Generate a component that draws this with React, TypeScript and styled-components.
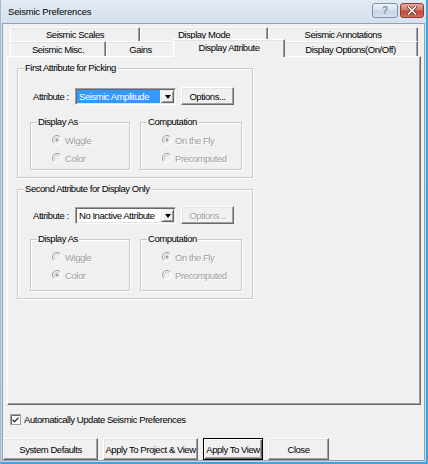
import React from "react";
import styled, { createGlobalStyle, css } from "styled-components";

const FONT = `"Liberation Sans", Arial, sans-serif`;

const GlobalStyle = createGlobalStyle`
  html, body {
    margin: 0;
    padding: 0;
    background: #ffffff;
  }
  body {
    font-family: ${FONT};
    font-size: 9.5px;
    letter-spacing: -0.45px;
    color: #000;
  }
`;

//styled-components//

const Window = styled.div`
  width: 428px;
  height: 464px;
  box-sizing: border-box;
  display: flex;
  flex-direction: column;
  background: linear-gradient(to bottom, #e2eaf3 0px, #d6e1ed 22px, #c8d8ea 100%);
  border-left: 1px solid #a6b9cc;
  border-right: 2px solid #3ba4dc;
  border-bottom: 2px solid #3ba4dc;
  padding: 0 1px 1px 1px;
`;

const TitleBar = styled.div`
  height: 23px;
  flex: none;
  display: flex;
  align-items: flex-start;
  padding: 0 1px 0 6px;
  box-sizing: border-box;
`;

const TitleText = styled.span`
  flex: 1;
  font-size: 9.5px;
  letter-spacing: -0.2px;
  line-height: 13px;
  padding-top: 5px;
  color: #000;
`;

const CaptionButton = styled.div<{ $close?: boolean; $w: number }>`
  width: ${(p) => p.$w}px;
  height: 15px;
  margin-top: 3px;
  margin-left: 2px;
  box-sizing: border-box;
  border-radius: 3px;
  display: flex;
  align-items: center;
  justify-content: center;
  border: 1px solid #7d93ab;
  background: linear-gradient(to bottom, #eef3f9 0%, #d8e2ee 45%, #c6d4e4 55%, #d5e1ee 100%);
  color: #8193a8;
  font: bold 10px "Liberation Sans", sans-serif;
  letter-spacing: 0;
  ${(p) =>
    p.$close &&
    css`
      border-color: #8d3b35;
      background: linear-gradient(to bottom, #e9a99d 0%, #d47a6c 45%, #c2493a 55%, #d36a55 100%);
    `}
`;

const Client = styled.div`
  flex: 1;
  display: flex;
  flex-direction: column;
  background: #f0f0f0;
  border: 1px solid #8ea3b9;
`;

const TabArea = styled.div`
  margin: 3px 3px 0 4px;
  display: flex;
  flex-direction: column;
`;

const TabRows = styled.div`
  display: flex;
  flex-direction: column;
  padding: 0 2px 0 3px;
`;

const TabRow = styled.div<{ $h: number }>`
  display: flex;
  height: ${(p) => p.$h}px;
  position: relative;
`;

const Tab = styled.div<{ $w: number; $active?: boolean }>`
  width: ${(p) => p.$w}px;
  flex: none;
  box-sizing: border-box;
  display: flex;
  align-items: center;
  justify-content: center;
  background: #f0f0f0;
  border-top: 1px solid #ffffff;
  border-left: 1px solid #ffffff;
  border-right: 1px solid #696969;
  box-shadow: inset -1px 0 0 #a0a0a0, inset 0 1px 0 #e3e3e3;
  white-space: nowrap;
  ${(p) =>
    p.$active &&
    css`
      width: ${p.$w + 4}px;
      margin: -2px -2px -1px -2px;
      padding-bottom: 2px;
      position: relative;
      z-index: 2;
    `}
`;

const Panel = styled.div`
  height: 349px;
  box-sizing: border-box;
  border: 1px solid;
  border-color: #ffffff #696969 #696969 #ffffff;
  box-shadow: inset -1px -1px 0 #a0a0a0;
  padding: 11px 0 0 9px;
  display: flex;
  flex-direction: column;
  gap: 11px;
`;

const Group = styled.div<{ $w: number; $h: number }>`
  position: relative;
  box-sizing: border-box;
  width: ${(p) => p.$w}px;
  height: ${(p) => p.$h}px;
  border: 1px solid #c9c9c9;
  box-shadow: inset 1px 1px 0 #ffffff, 1px 1px 0 #ffffff;
  display: flex;
  flex-direction: column;
`;

const Legend = styled.span`
  position: absolute;
  top: -7px;
  left: 6px;
  padding: 0 1px;
  background: #f0f0f0;
  line-height: 12px;
  white-space: nowrap;
`;

const AttrRow = styled.div<{ $top: number }>`
  display: flex;
  align-items: center;
  margin-top: ${(p) => p.$top}px;
  padding-left: 15px;
`;

const AttrLabel = styled.span`
  width: 42px;
  flex: none;
  white-space: nowrap;
`;

const Combo = styled.div`
  width: 101px;
  height: 17px;
  box-sizing: border-box;
  display: flex;
  align-items: stretch;
  background: #ffffff;
  border: 1px solid;
  border-color: #a0a0a0 #ffffff #ffffff #a0a0a0;
  box-shadow: inset 1px 1px 0 #696969, inset -1px -1px 0 #e3e3e3;
  padding: 1px;
`;

const ComboText = styled.div<{ $selected?: boolean }>`
  flex: 1;
  display: flex;
  align-items: center;
  padding-left: 2px;
  margin-right: 1px;
  white-space: nowrap;
  overflow: hidden;
  ${(p) =>
    p.$selected &&
    css`
      background: #3399ff;
      color: #ffffff;
    `}
`;

const ComboButton = styled.div`
  width: 13px;
  flex: none;
  box-sizing: border-box;
  background: #f0f0f0;
  border: 1px solid;
  border-color: #e3e3e3 #696969 #696969 #e3e3e3;
  box-shadow: inset 1px 1px 0 #ffffff, inset -1px -1px 0 #a0a0a0;
  display: flex;
  align-items: center;
  justify-content: center;
`;

const Arrow = styled.span`
  width: 0;
  height: 0;
  margin-top: 1px;
  border-left: 3.5px solid transparent;
  border-right: 3.5px solid transparent;
  border-top: 4px solid #000;
`;

const Button = styled.button<{ $w: number; $h?: number; $primary?: boolean }>`
  width: ${(p) => p.$w}px;
  height: ${(p) => p.$h ?? 22}px;
  flex: none;
  box-sizing: border-box;
  padding: 0;
  margin: 0;
  background: #f0f0f0;
  font-family: ${FONT};
  font-size: 9.5px;
  letter-spacing: -0.45px;
  color: #000;
  border: 1px solid;
  border-color: #ffffff #696969 #696969 #ffffff;
  box-shadow: inset -1px -1px 0 #a0a0a0, inset 1px 1px 0 #e3e3e3;
  white-space: nowrap;
  &:disabled {
    color: #a0a0a0;
    text-shadow: 1px 1px 0 #ffffff;
  }
  ${(p) =>
    p.$primary &&
    css`
      border-color: #000;
      box-shadow: inset 1px 1px 0 #ffffff, inset -1px -1px 0 #696969,
        inset -2px -2px 0 #a0a0a0;
    `}
`;

const SubRow = styled.div<{ $top: number }>`
  display: flex;
  gap: 10px;
  padding-left: 12px;
  margin-top: ${(p) => p.$top}px;
`;

const SubGroup = styled(Group)`
  padding-top: 8px;
`;

const RadioRow = styled.div`
  display: flex;
  align-items: center;
  height: 18px;
  padding-left: 21px;
  gap: 3px;
  color: #a0a0a0;
  text-shadow: 1px 1px 0 #ffffff;
`;

const CheckRow = styled.div`
  display: flex;
  align-items: center;
  gap: 3px;
  height: 13px;
  margin: 8px 0 0 7px;
`;

const ButtonRow = styled.div`
  display: flex;
  gap: 5px;
  margin-top: 12px;
`;

////////////////////

const RadioMark = ({ checked }: { checked?: boolean }) => (
  <svg width="10" height="10" viewBox="0 0 12 12">
    <circle cx="6" cy="6" r="5.5" fill="#f0f0f0" />
    <path d="M2.1 9.9 A5.5 5.5 0 0 1 9.9 2.1" fill="none" stroke="#a0a0a0" strokeWidth="1.2" />
    <path d="M9.9 2.1 A5.5 5.5 0 0 1 2.1 9.9" fill="none" stroke="#ffffff" strokeWidth="1.2" />
    <path d="M3 8.6 A4.2 4.2 0 0 1 8.6 3" fill="none" stroke="#c8c8c8" strokeWidth="1" />
    {checked && <circle cx="6" cy="6" r="1.8" fill="#a0a0a0" />}
  </svg>
);

const CheckMark = () => (
  <svg width="11" height="11" viewBox="0 0 11 11">
    <rect x="0.5" y="0.5" width="10" height="10" fill="#ffffff" stroke="#a0a0a0" />
    <path d="M1.5 10 V1.5 H10" fill="none" stroke="#696969" />
    <path d="M2.5 5 L4.5 7 L8.5 3 L8.5 4.6 L4.5 8.6 L2.5 6.6 Z" fill="#000" />
  </svg>
);

const CloseGlyph = () => (
  <svg width="10" height="9" viewBox="0 0 10 9">
    <path d="M1.5 1 L8.5 8 M8.5 1 L1.5 8" stroke="#5a2620" strokeWidth="3" strokeLinecap="square" />
    <path d="M1.5 1 L8.5 8 M8.5 1 L1.5 8" stroke="#ffffff" strokeWidth="1.6" strokeLinecap="square" />
  </svg>
);

interface RadioItem {
  label: string;
  checked?: boolean;
}

interface AttributeGroupProps {
  title: string;
  value: string;
  selected?: boolean;
  optionsEnabled?: boolean;
  rowTop: number;
  subTop: number;
  subHeight: number;
  displayAs: RadioItem[];
  computation: RadioItem[];
}

const AttributeGroup = (props: AttributeGroupProps) => {
  return (
    <Group $w={236} $h={110}>
      <Legend>{props.title}</Legend>
      <AttrRow $top={props.rowTop}>
        <AttrLabel>Attribute :</AttrLabel>
        <Combo>
          <ComboText $selected={props.selected}>{props.value}</ComboText>
          <ComboButton>
            <Arrow />
          </ComboButton>
        </Combo>
        <Button $w={53} $h={18} style={{ marginLeft: 5 }} disabled={!props.optionsEnabled}>
          Options...
        </Button>
      </AttrRow>
      <SubRow $top={props.subTop}>
        <SubGroup $w={100} $h={props.subHeight}>
          <Legend>Display As</Legend>
          {props.displayAs.map((item, index) => (
            <RadioRow key={index}>
              <RadioMark checked={item.checked} />
              {item.label}
            </RadioRow>
          ))}
        </SubGroup>
        <SubGroup $w={102} $h={props.subHeight}>
          <Legend>Computation</Legend>
          {props.computation.map((item, index) => (
            <RadioRow key={index}>
              <RadioMark checked={item.checked} />
              {item.label}
            </RadioRow>
          ))}
        </SubGroup>
      </SubRow>
    </Group>
  );
};

const row1 = [
  { label: "Seismic Scales", w: 130 },
  { label: "Display Mode", w: 128 },
  { label: "Seismic Annotations", w: 150 },
];

const row2 = [
  { label: "Seismic Misc.", w: 96 },
  { label: "Gains", w: 69 },
  { label: "Display Attribute", w: 108, active: true },
  { label: "Display Options(On/Off)", w: 135 },
];

const App = () => {
  return (
    <>
      <GlobalStyle />
      <Window>
        <TitleBar>
          <TitleText>Seismic Preferences</TitleText>
          <CaptionButton $w={26}>?</CaptionButton>
          <CaptionButton $w={24} $close>
            <CloseGlyph />
          </CaptionButton>
        </TitleBar>
        <Client>
          <TabArea>
            <TabRows>
              <TabRow $h={14}>
                {row1.map((tab) => (
                  <Tab key={tab.label} $w={tab.w}>
                    {tab.label}
                  </Tab>
                ))}
              </TabRow>
              <TabRow $h={15}>
                {row2.map((tab) => (
                  <Tab key={tab.label} $w={tab.w} $active={tab.active}>
                    {tab.label}
                  </Tab>
                ))}
              </TabRow>
            </TabRows>
            <Panel>
              <AttributeGroup
                title="First Attribute for Picking"
                value="Seismic Amplitude"
                selected
                optionsEnabled
                rowTop={18}
                subTop={17}
                subHeight={48}
                displayAs={[{ label: "Wiggle", checked: true }, { label: "Color" }]}
                computation={[{ label: "On the Fly", checked: true }, { label: "Precomputed" }]}
              />
              <AttributeGroup
                title="Second Attribute for Display Only"
                value="No Inactive Attribute"
                rowTop={16}
                subTop={15}
                subHeight={52}
                displayAs={[{ label: "Wiggle" }, { label: "Color", checked: true }]}
                computation={[{ label: "On the Fly", checked: true }, { label: "Precomputed" }]}
              />
            </Panel>
          </TabArea>
          <CheckRow>
            <CheckMark />
            Automatically Update Seismic Preferences
          </CheckRow>
          <ButtonRow>
            <Button $w={95}>System Defaults</Button>
            <Button $w={95}>Apply To Project &amp; View</Button>
            <Button $w={60} $primary>
              Apply To View
            </Button>
            <Button $w={61}>Close</Button>
          </ButtonRow>
        </Client>
      </Window>
    </>
  );
};

export default App;
